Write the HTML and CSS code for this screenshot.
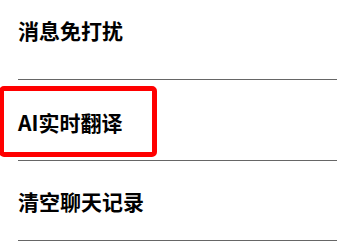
FILE: index.html
```html
<!DOCTYPE html>
<html lang="zh-CN">
<head>
  <meta charset="UTF-8">
  <meta name="viewport" content="width=device-width, initial-scale=1.0">
  <title>设置</title>
  <link rel="stylesheet" href="styles.css">
</head>
<body>
  <ul class="settings">
    <li class="item item-first">消息免打扰</li>
    <li class="item item-active">
      <div class="highlight">AI实时翻译</div>
    </li>
    <li class="item item-last">清空聊天记录</li>
  </ul>
</body>
</html>
```

FILE: styles.css
```css
body {
  margin: 0;
  background-color: #fff;
  font-family: "Noto Sans CJK SC", "Noto Sans", sans-serif;
  color: #000;
  overflow: hidden;
}

.settings {
  list-style: none;
  margin: 0;
  padding: 0;
}

.item {
  margin-left: 18px;
  border-bottom: 1px solid #666;
  font-size: 21px;
  font-weight: bold;
  line-height: 24px;
  box-sizing: border-box;
}

.item-first {
  height: 80px;
  padding-top: 18px;
}

.item-active {
  height: 81px;
  padding-top: 6px;
}

.item-last {
  height: 80px;
  padding-top: 28px;
}

.highlight {
  margin-left: -19px;
  width: 158px;
  height: 71px;
  box-sizing: border-box;
  border: 5px solid #ff0000;
  border-radius: 5px;
  padding-left: 14px;
  display: flex;
  align-items: center;
}
```
